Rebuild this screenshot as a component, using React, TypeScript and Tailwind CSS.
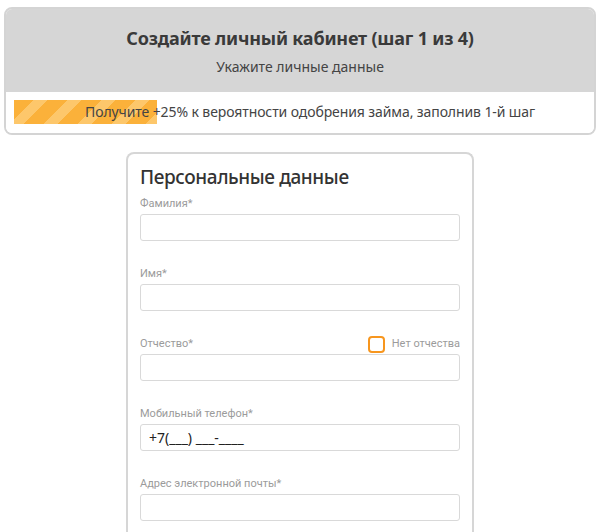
export default function App() {
  const fields = [
    { label: "Фамилия*", value: "" },
    { label: "Имя*", value: "" },
    { label: "Отчество*", value: "", extra: true },
    { label: "Мобильный телефон*", value: "+7(___) ___-____" },
    { label: "Адрес электронной почты*", value: "" },
  ];

  return (
    <div className="min-h-[532px] bg-white px-[4px] pt-[7px] font-['Noto_Sans',sans-serif] text-[#333]">
      <section className="overflow-hidden rounded-[8px] border-2 border-[#d4d4d4]">
        <div className="bg-[#d6d6d6] pb-[15px] pt-[15px] text-center">
          <h1 className="text-[18px] font-bold leading-[28px] tracking-[-0.2px] text-[#3a3a3a]">
            Создайте личный кабинет (шаг 1 из 4)
          </h1>
          <p className="mt-[5px] text-[14px] leading-[20px] text-[#444]">Укажите личные данные</p>
        </div>
        <div className="bg-white px-[8px] pb-[9px] pt-[8px]">
          <div className="relative h-[24px]">
            <div className="absolute inset-y-0 left-0 w-[143px] bg-[repeating-linear-gradient(135deg,#fbb13a_0px,#fbb13a_14px,#fdc76b_14px,#fdc76b_24px)]" />
            <p className="relative pl-[20px] text-center text-[14px] leading-[24px] tracking-[-0.1px] text-[#444]">
              Получите +25% к вероятности одобрения займа, заполнив 1-й шаг
            </p>
          </div>
        </div>
      </section>

      <section className="mx-auto mt-[17px] w-[348px] rounded-t-[8px] border-2 border-b-0 border-[#d6d6d6] px-[12px] pb-[20px] pt-[8px]">
        <h2 className="text-[19px] font-medium leading-[30px] tracking-[-0.4px] text-[#333]">Персональные данные</h2>
        <div className="mt-[4px] flex flex-col gap-[25px]">
          {fields.map((f) => (
            <div key={f.label}>
              <div className="flex h-[16px] items-center justify-between">
                <span className="font-['Roboto',sans-serif] text-[11px] text-[#9b9b9b]">{f.label}</span>
                {f.extra && (
                  <label className="flex items-center gap-[7px]">
                    <span className="h-[17px] w-[17px] rounded-[4px] border-2 border-[#f7961e]" />
                    <span className="font-['Roboto',sans-serif] text-[11px] text-[#9b9b9b]">Нет отчества</span>
                  </label>
                )}
              </div>
              <div className="mt-[2px] flex h-[27px] items-center rounded-[3px] border border-[#d9d9d9] px-[8px] text-[14px] text-[#222]">
                {f.value}
              </div>
            </div>
          ))}
        </div>
      </section>
    </div>
  );
}
